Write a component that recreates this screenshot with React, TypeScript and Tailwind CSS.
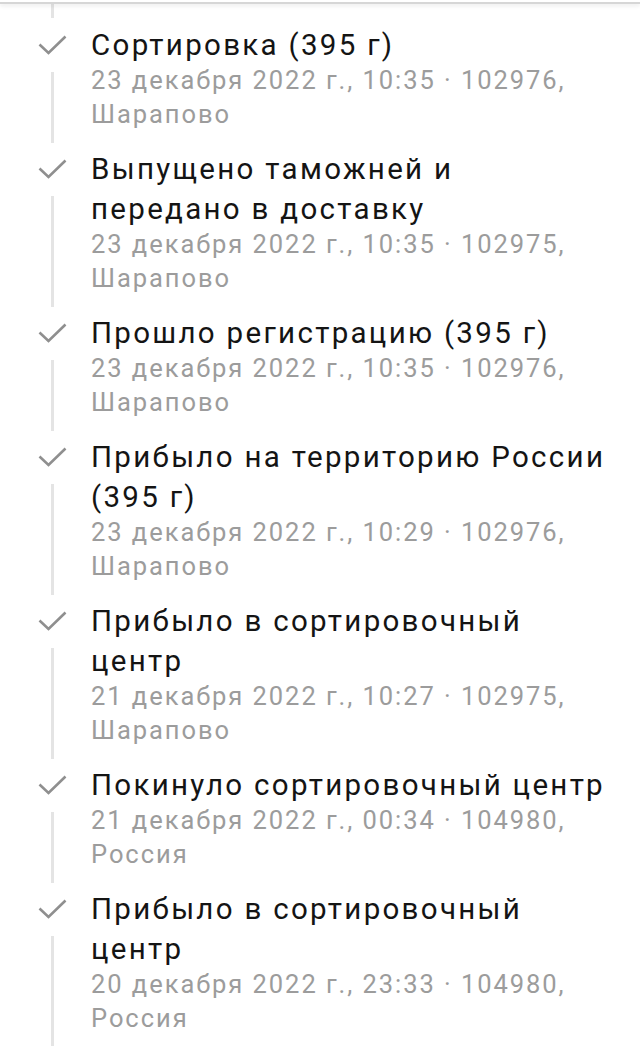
import React from 'react';

interface TrackEvent {
    title: string[];
    date: string;
    place: string;
}

// title lines are kept as the app breaks them
const events: TrackEvent[] = [
    { title: ['Сортировка (395 г)'], date: '23 декабря 2022 г., 10:35 · 102976,', place: 'Шарапово' },
    { title: ['Выпущено таможней и', 'передано в доставку'], date: '23 декабря 2022 г., 10:35 · 102975,', place: 'Шарапово' },
    { title: ['Прошло регистрацию (395 г)'], date: '23 декабря 2022 г., 10:35 · 102976,', place: 'Шарапово' },
    { title: ['Прибыло на территорию России', '(395 г)'], date: '23 декабря 2022 г., 10:29 · 102976,', place: 'Шарапово' },
    { title: ['Прибыло в сортировочный', 'центр'], date: '21 декабря 2022 г., 10:27 · 102975,', place: 'Шарапово' },
    { title: ['Покинуло сортировочный центр'], date: '21 декабря 2022 г., 00:34 · 104980,', place: 'Россия' },
    { title: ['Прибыло в сортировочный', 'центр'], date: '20 декабря 2022 г., 23:33 · 104980,', place: 'Россия' },
];

const Check = () => (
    <svg width="29" height="20" viewBox="0 0 29 20" fill="none">
        <polyline
            points="1.5,9.5 10.5,18 27.5,1.5"
            stroke="#8f8f8f"
            strokeWidth="2.6"
            strokeLinecap="butt"
            strokeLinejoin="miter"
        />
    </svg>
);

function EventRow({ ev }: { ev: TrackEvent }) {
    return (
        <div className="flex pl-[38px]">
            {/* Timeline rail */}
            <div className="w-[29px] flex flex-col items-center shrink-0">
                <div className="h-[40px] flex items-center">
                    <Check />
                </div>
                <div className="w-[3px] flex-1 bg-[#e4e4e4] mt-[7px] mb-[6px]" />
            </div>

            {/* Text */}
            <div className="ml-[24px] pb-[18px] flex-1 min-w-0 whitespace-nowrap">
                {ev.title.map((line, i) => (
                    <div key={i} className="text-[29.5px] leading-[40px] tracking-[2.3px] text-[#141414]">
                        {line}
                    </div>
                ))}
                <div className="-mt-[2px] text-[25.5px] leading-[34px] tracking-[1.95px] text-[#9c9c9c]">
                    <div>{ev.date}</div>
                    <div>{ev.place}</div>
                </div>
            </div>
        </div>
    );
}

export default function App() {
    return (
        <div
            className="w-[640px] h-[1046px] overflow-hidden bg-white"
            style={{ fontFamily: 'Roboto, "Noto Sans", sans-serif' }}
        >
            {/* Top edge of header */}
            <div className="relative z-10 h-[4px] bg-white border-b-[2px] border-[#d6d6d6] shadow-[0_2px_4px_rgba(0,0,0,0.08)]" />

            {/* Tail of the previous event's rail */}
            <div className="flex pl-[38px] h-[21px]">
                <div className="w-[29px] flex justify-center">
                    <div className="w-[3px] h-[14px] bg-[#e4e4e4]" />
                </div>
            </div>

            {events.map((ev, i) => (
                <EventRow key={i} ev={ev} />
            ))}
        </div>
    );
}
